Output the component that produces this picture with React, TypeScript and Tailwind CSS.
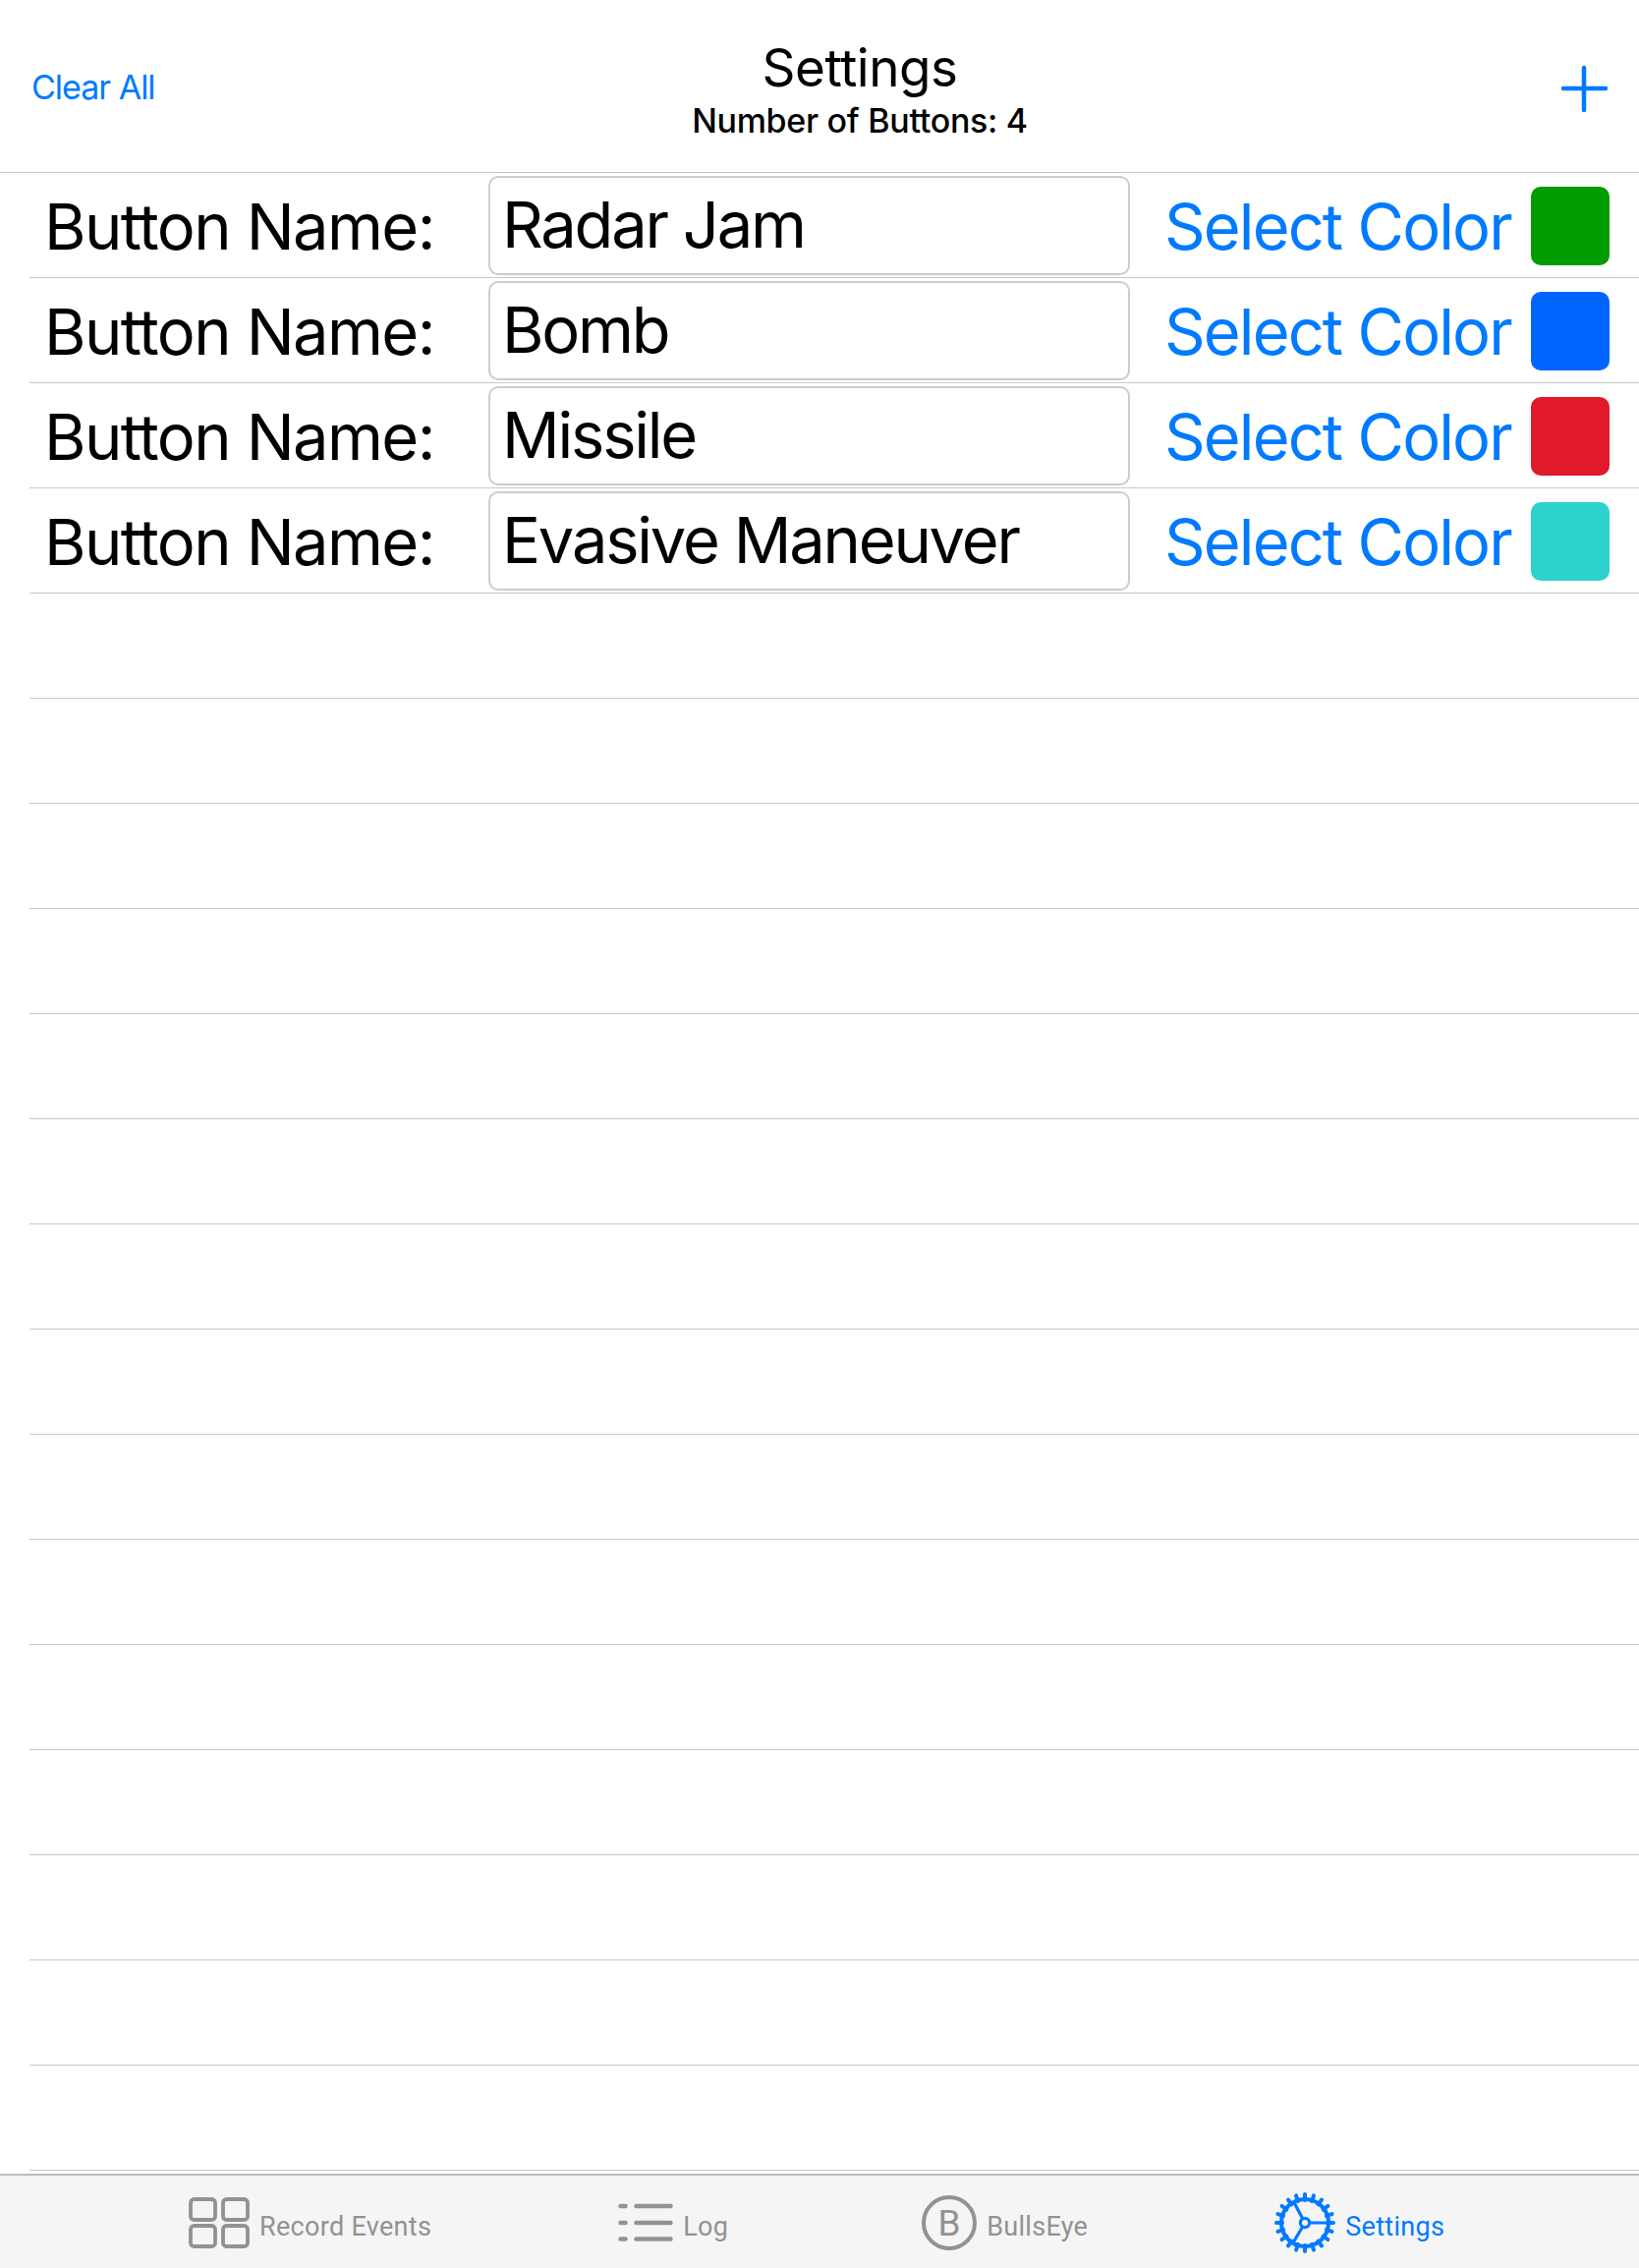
const buttons = [
  { name: "Radar Jam", swatch: "bg-[#009c00]" },
  { name: "Bomb", swatch: "bg-[#0065ff]" },
  { name: "Missile", swatch: "bg-[#e01a2b]" },
  { name: "Evasive Maneuver", swatch: "bg-[#2dd2cd]" },
];

const emptyRows = Array.from({ length: 15 }, (_, i) => i);
const gearTeeth = Array.from({ length: 20 }, (_, i) => i * 18);

function PlusIcon() {
  return (
    <svg width="48" height="48" viewBox="0 0 48 48" className="mt-[4px] text-[#007aff]">
      <path d="M24 3V46M3 24H46" stroke="currentColor" strokeWidth="4.5" strokeLinecap="round" fill="none" />
    </svg>
  );
}

function GridIcon() {
  return (
    <svg width="62" height="52" viewBox="0 0 62 52" fill="none" stroke="#929292" strokeWidth="3.8" className="mt-[2px]">
      <rect x="2" y="2" width="25" height="21" rx="3.5" />
      <rect x="35" y="2" width="25" height="21" rx="3.5" />
      <rect x="2" y="29" width="25" height="21" rx="3.5" />
      <rect x="35" y="29" width="25" height="21" rx="3.5" />
    </svg>
  );
}

function ListIcon() {
  return (
    <svg width="56" height="40" viewBox="0 0 56 40" fill="none" stroke="#929292" strokeWidth="4.5" strokeLinecap="round" className="mt-[2px]">
      <path d="M2.5 3H7.5M2.5 20H7.5M2.5 36.5H7.5" />
      <path d="M18.5 3H53.5M18.5 20H53.5M18.5 36.5H53.5" />
    </svg>
  );
}

function BullsEyeIcon() {
  return (
    <div className="mt-[2px] flex h-[56px] w-[56px] items-center justify-center rounded-full border-[4px] border-[#929292] font-['Roboto',sans-serif] text-[37px] leading-none text-[#929292]">
      B
    </div>
  );
}

function GearIcon() {
  return (
    <svg width="62" height="62" viewBox="0 0 62 62" fill="none" stroke="#007aff" className="mt-[2px]">
      {gearTeeth.map((angle) => (
        <path key={angle} d="M31 2V8" strokeWidth="4" strokeLinecap="round" transform={`rotate(${angle} 31 31)`} />
      ))}
      <circle cx="31" cy="31" r="24" strokeWidth="4" />
      <circle cx="31" cy="31" r="4.6" strokeWidth="3.2" />
      <path d="M35.6 31H55M28.9 26.9L19.5 9.5M28.7 35L18.5 52" strokeWidth="3.2" />
    </svg>
  );
}

function TabItem({ icon, label, active, className }: { icon: React.ReactNode; label: string; active?: boolean; className?: string }) {
  return (
    <div className={`flex items-center gap-[10px] ${className ?? ""}`}>
      {icon}
      <span className={`mt-[10px] text-[27px] leading-none tracking-[0.3px] ${active ? "text-[#007aff]" : "text-[#929292]"}`}>{label}</span>
    </div>
  );
}

export default function App() {
  return (
    <div className="flex h-[2308px] w-[1668px] flex-col overflow-hidden bg-white font-['Inter','Liberation_Sans',sans-serif] text-black">
      {/* Nav bar */}
      <header className="relative flex h-[176px] shrink-0 items-center justify-between border-b border-[#c8c8c8] px-[32px]">
        <span className="mt-[3px] text-[34px] leading-none tracking-[-1px] text-[#007aff]">Clear All</span>
        <div className="absolute top-[39px] left-[675px] flex w-[400px] flex-col items-center">
          <span className="text-[53px] leading-[60px] tracking-[-0.5px]">Settings</span>
          <span className="mt-[2px] text-[34px] leading-[44px] font-medium tracking-[-0.3px]">Number of Buttons: 4</span>
        </div>
        <PlusIcon />
      </header>

      {/* Button rows */}
      <main className="ml-[30px] flex-1">
        {buttons.map((b) => (
          <div key={b.name} className="flex h-[107px] items-center border-b border-[#c8c8c8]">
            <span className="mt-[2px] ml-[15px] w-[452px] text-[65px] leading-none tracking-[-1.6px]">Button Name:</span>
            <div className="flex h-[101px] w-[653px] items-center rounded-[10px] border-2 border-[#cccccc] pb-[2px] pl-[12px] text-[65px] leading-none tracking-[-2.2px]">
              {b.name}
            </div>
            <span className="mt-[2px] ml-[35px] w-[373px] text-[65px] leading-none tracking-[-1.9px] text-[#007aff]">Select Color</span>
            <div className={`mt-[1px] h-[80px] w-[80px] rounded-[10px] ${b.swatch}`} />
          </div>
        ))}
        {emptyRows.map((i) => (
          <div key={i} className="h-[107px] border-b border-[#c8c8c8]" />
        ))}
      </main>

      {/* Tab bar */}
      <footer className="flex h-[96px] shrink-0 items-center gap-[190px] border-t-2 border-[#bdbdbd] bg-[#f5f5f5] pl-[192px] font-['Roboto',sans-serif]">
        <TabItem icon={<GridIcon />} label="Record Events" />
        <TabItem icon={<ListIcon />} label="Log" />
        <TabItem icon={<BullsEyeIcon />} label="BullsEye" className="ml-[7px]" />
        <TabItem icon={<GearIcon />} label="Settings" active />
      </footer>
    </div>
  );
}
